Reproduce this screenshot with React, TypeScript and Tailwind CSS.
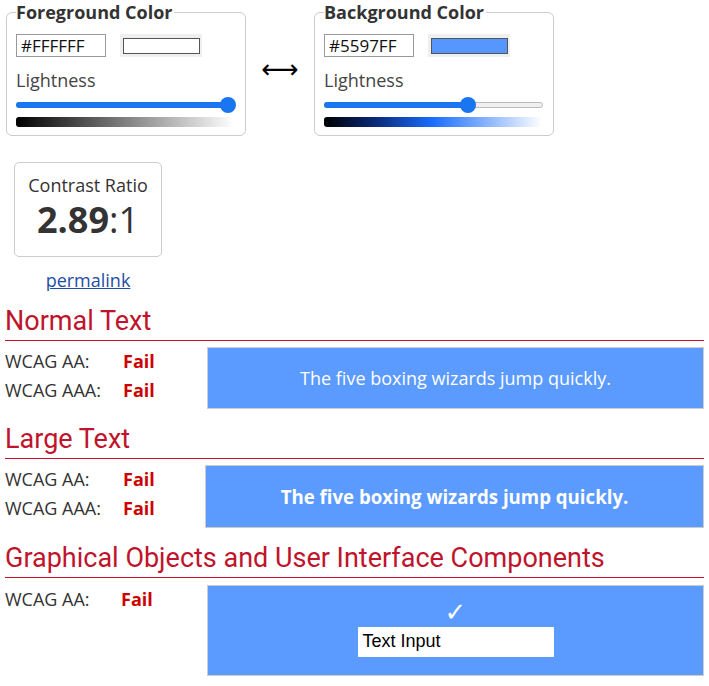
import React from "react";

type ColorBoxProps = {
  title: string;
  hex: string;
  swatch: string;
  value: number;
  gradient: string;
};

const ColorBox = ({ title, hex, swatch, value, gradient }: ColorBoxProps) => {
  const thumbLeft = 7 + (value / 100) * (219 - 14);
  return (
    <fieldset className="h-[135px] w-[240px] rounded-[6px] border border-[#cccccc] pl-[9px] pr-[8px]">
      <legend className="pl-0 pr-[2px] text-[18px] font-bold leading-[22px] text-[#333]">
        {title}
      </legend>
      <div className="mt-[11px] flex items-center gap-[14px]">
        <div className="flex h-[23px] w-[90px] items-center border border-[#999] px-[4px] text-[17px] text-[#111]">
          {hex}
        </div>
        <div className="flex h-[23px] w-[82px] items-center justify-center bg-[#efefef]">
          <div
            className="h-[16px] w-[77px] border border-[#555]"
            style={{ backgroundColor: swatch }}
          />
        </div>
      </div>
      <div className="mt-[11px] text-[18px] leading-[24px] text-[#444]">
        Lightness
      </div>
      <div className="relative mt-[5px] h-[16px] w-[219px]">
        <div className="absolute left-0 right-0 top-[5px] h-[6px] rounded-full border border-[#bbb] bg-[#efefef]" />
        <div
          className="absolute left-0 top-[5px] h-[6px] rounded-full bg-[#1a75f0]"
          style={{ width: thumbLeft }}
        />
        <div
          className="absolute top-0 h-[16px] w-[16px] -translate-x-1/2 rounded-full bg-[#1a75f0]"
          style={{ left: thumbLeft }}
        />
      </div>
      <div
        className="mt-[4px] h-[10px] w-[218px] rounded-[3px]"
        style={{ background: gradient }}
      />
    </fieldset>
  );
};

const Row = ({ label, failX }: { label: string; failX: string }) => (
  <div className="flex h-[29px] items-center">
    <span className={`${failX} text-[18px] text-[#333]`}>{label}</span>
    <span className="text-[18px] font-bold text-[#cc0000]">Fail</span>
  </div>
);

const Heading = ({ children }: { children: React.ReactNode }) => (
  <h2 className="flex h-[37px] items-end border-b border-[#c8102e] pb-[4px] font-['Roboto',sans-serif] text-[27px] leading-[30px] text-[#c0142c]">
    {children}
  </h2>
);

export default function App() {
  return (
    <div className="w-[709px] bg-white pl-[5px] pr-[5px] font-['Open_Sans',sans-serif] text-[#333]">
      <div className="flex items-start pl-[1px] pt-[1px]">
        <ColorBox
          title="Foreground Color"
          hex="#FFFFFF"
          swatch="#FFFFFF"
          value={100}
          gradient="linear-gradient(to right, #000000, #808080, #ffffff)"
        />
        <div className="flex h-[140px] w-[68px] items-center justify-center pb-[3px] font-['DejaVu_Sans',sans-serif] text-[26px] text-black">
          ⟷
        </div>
        <ColorBox
          title="Background Color"
          hex="#5597FF"
          swatch="#5597FF"
          value={66.7}
          gradient="linear-gradient(to right, #000000, #0a2d80, #1a6eff, #8ab5ff, #ffffff)"
        />
      </div>

      <div className="ml-[9px] mt-[21px] flex h-[95px] w-[148px] flex-col items-center rounded-[5px] border border-[#cccccc] pt-[11px]">
        <div className="text-[18px] leading-[22px] text-[#333]">Contrast Ratio</div>
        <div className="mt-[2px] text-[36px] leading-[44px] text-[#333]">
          <span className="font-bold">2.89</span>:1
        </div>
      </div>
      <div className="ml-[9px] mt-[10px] w-[148px] text-center">
        <a href="#" className="text-[18px] text-[#1f4ea3] underline">
          permalink
        </a>
      </div>

      <div className="mt-[10px]">
        <Heading>Normal Text</Heading>
        <div className="mt-[6px] flex">
          <div className="w-[202px]">
            <Row label="WCAG AA:" failX="w-[118px]" />
            <Row label="WCAG AAA:" failX="w-[118px]" />
          </div>
          <div className="flex h-[62px] flex-1 items-center justify-center border border-[#cccccc] bg-[#5b9aff] text-[18px] text-white">
            The five boxing wizards jump quickly.
          </div>
        </div>
      </div>

      <div className="mt-[13px]">
        <Heading>Large Text</Heading>
        <div className="mt-[6px] flex">
          <div className="w-[200px]">
            <Row label="WCAG AA:" failX="w-[118px]" />
            <Row label="WCAG AAA:" failX="w-[118px]" />
          </div>
          <div className="flex h-[63px] flex-1 items-center justify-center border border-[#cccccc] bg-[#5b9aff] text-[18.67px] font-bold text-white">
            The five boxing wizards jump quickly.
          </div>
        </div>
      </div>

      <div className="mt-[13px]">
        <Heading>Graphical Objects and User Interface Components</Heading>
        <div className="mt-[7px] flex">
          <div className="w-[202px]">
            <Row label="WCAG AA:" failX="w-[116px]" />
          </div>
          <div className="flex h-[91px] flex-1 flex-col items-center justify-center border border-[#cccccc] bg-[#5b9aff] pb-[7px]">
            <div className="font-['DejaVu_Sans',sans-serif] text-[26px] leading-[28px] text-white">
              ✓
            </div>
            <div className="mt-[1px] flex h-[30px] w-[196px] items-center bg-white px-[5px] font-['Liberation_Sans',sans-serif] text-[18px] text-black">
              Text Input
            </div>
          </div>
        </div>
      </div>
    </div>
  );
}
